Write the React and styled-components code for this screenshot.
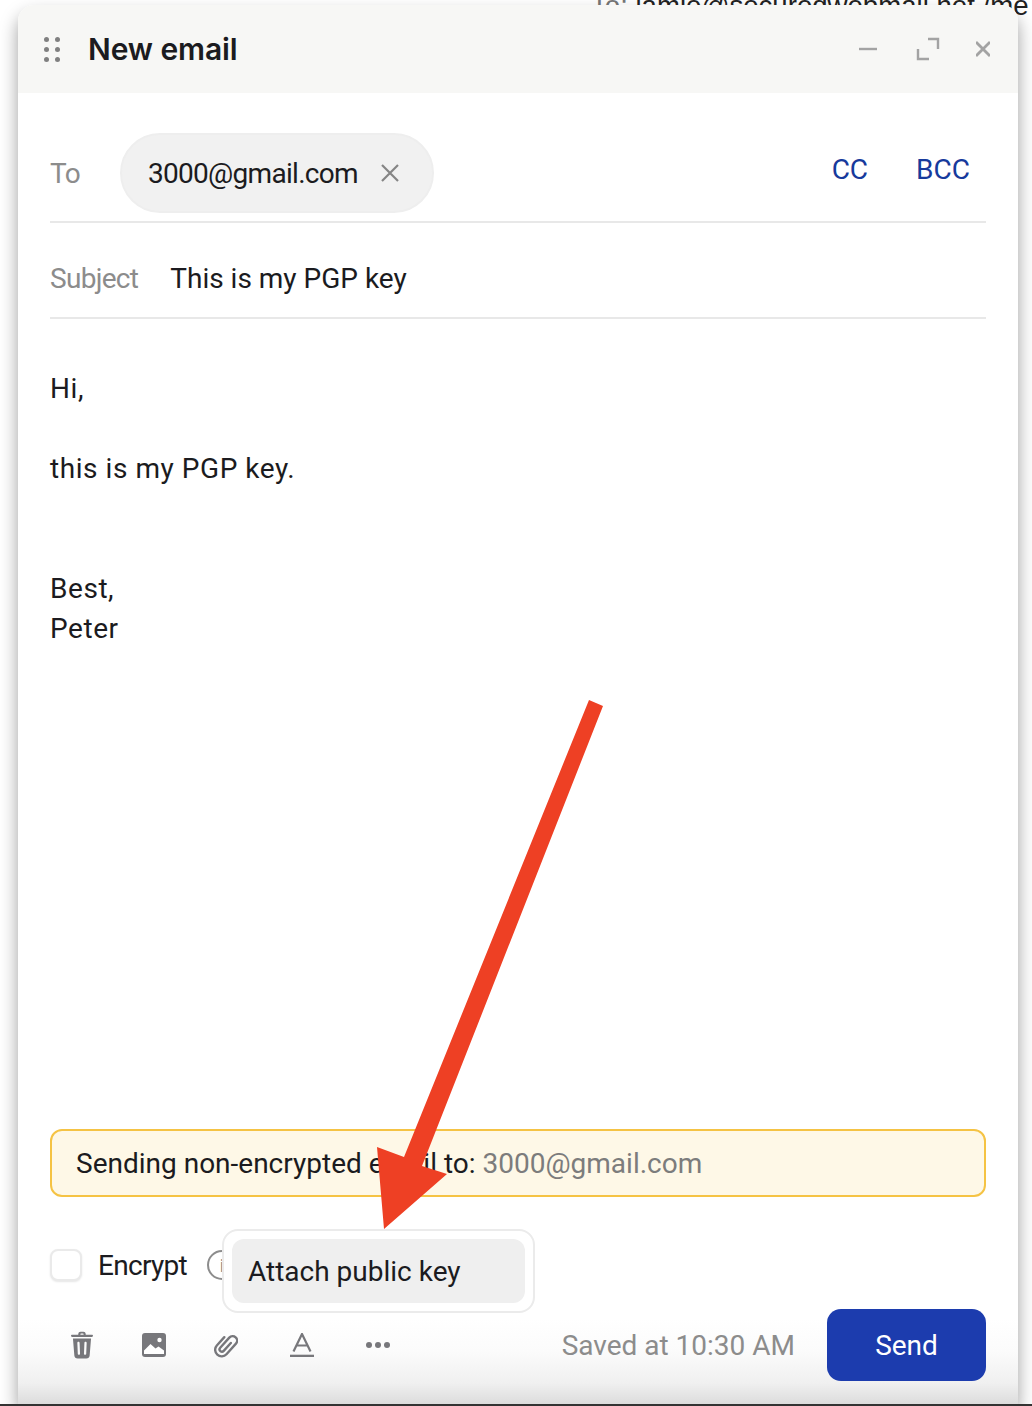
import React from "react";
import styled, { createGlobalStyle } from "styled-components";

const GlobalStyle = createGlobalStyle`
  html, body {
    margin: 0;
    padding: 0;
    background: #fff;
  }
  body {
    font-family: Roboto, "Liberation Sans", sans-serif;
    color: #1b1b20;
  }
`;

function GripIcon() {
  return (
    <svg width="16" height="25" viewBox="0 0 16 25" fill="#808080">
      <circle cx="2.5" cy="2.5" r="2.5" />
      <circle cx="13.5" cy="2.500" r="2.500" />
      <circle cx="2.500" cy="12.500" r="2.500" />
      <circle cx="13.500" cy="12.500" r="2.500" />
      <circle cx="2.500" cy="22.500" r="2.500" />
      <circle cx="13.500" cy="22.500" r="2.500" />
    </svg>
  );
}

function MinimizeIcon() {
  return (
    <svg width="24" height="24" viewBox="0 0 24 24" fill="none" stroke="#a3a3a3" strokeWidth="2.4">
      <path d="M3 12h18" />
    </svg>
  );
}

function ExpandIcon() {
  return (
    <svg width="24" height="24" viewBox="0 0 24 24" fill="none" stroke="#a3a3a3" strokeWidth="2.4">
      <path d="M12 2h10v10M2 12v10h11" />
    </svg>
  );
}

function CloseIcon() {
  return (
    <svg width="14" height="16" viewBox="0 0 14 16" fill="none" stroke="#a3a3a3" strokeWidth="2.800">
      <path d="M0 1l14 14M14 1L0 15" />
    </svg>
  );
}

function ChipCloseIcon() {
  return (
    <svg width="18" height="18" viewBox="0 0 18 18" fill="none" stroke="#858585" strokeWidth="2.200">
      <path d="M1 1l16 16M17 1L1 17" />
    </svg>
  );
}

function TrashIcon() {
  return (
    <svg width="24" height="28" viewBox="0 0 24 30" fill="#77777b">
      <path d="M8 3.500C8 1.600 9.200.8 10.500.8h3C14.800.8 16 1.600 16 3.500v.5h6.500c.8 0 1.300.5 1.300 1.200s-.5 1.300-1.300 1.300H1.500C.7 6.500.2 5.900.2 5.200S.7 4 1.500 4H8zm2.300.5h3.400v-.6c0-.4-.2-.6-.6-.6h-2.200c-.4 0-.6.2-.6.600z" />
      <path fillRule="evenodd" d="M2.300 8h19.400l-1.500 18.200c-.2 2-1.500 3.300-3.500 3.300H7.300c-2 0-3.300-1.300-3.500-3.300zM8.200 11.500c-.7 0-1.200.5-1.200 1.200l.5 11.600c0 .7.500 1.200 1.200 1.200s1.200-.5 1.200-1.200l-.5-11.600c0-.7-.5-1.200-1.200-1.200zm7.600 0c-.7 0-1.200.5-1.200 1.200l-.5 11.600c0 .7.500 1.200 1.200 1.200s1.200-.5 1.200-1.200l.5-11.600c0-.7-.5-1.200-1.200-1.200z" />
    </svg>
  );
}

function ImageIcon() {
  return (
    <svg width="24" height="24" viewBox="0 0 24 24">
      <rect width="24" height="24" rx="3" fill="#77777b" />
      <circle cx="17.500" cy="7" r="2.200" fill="#fff" />
      <path d="M2 21v-3.500l6.500-6.500 5 4.500 3-2 5.500 4V21z" fill="#fff" />
    </svg>
  );
}

function ClipIcon() {
  return (
    <svg width="24" height="26" viewBox="2 1 20 22" fill="none" stroke="#77777b" strokeWidth="2" strokeLinecap="round">
      <g transform="rotate(42 12 12)">
        <path d="M6.500 8v9.500a5.500 5.500 0 0 0 11 0V5.500a3.800 3.800 0 0 0-7.600 0v11.500a2 2 0 0 0 4 0V8" />
      </g>
    </svg>
  );
}

function TextIcon() {
  return (
    <svg width="32" height="24" viewBox="-4 0 32 24" fill="none" stroke="#77777b" strokeWidth="2.200">
      <path d="M3.500 18.500L12 1l8.500 17.500M6.500 12.500h11" />
      <path d="M0 23h24" strokeWidth="2.600" />
    </svg>
  );
}

function DotsIcon() {
  return (
    <svg width="24" height="8" viewBox="0 0 24 8" fill="#77777b">
      <circle cx="3" cy="4" r="3" />
      <circle cx="12" cy="4" r="3" />
      <circle cx="21" cy="4" r="3" />
    </svg>
  );
}

function Arrow() {
  return (
    <ArrowSvg width="1032" height="1406" viewBox="0 0 1032 1406">
      <polygon
        points="589,700 603,706 422,1166 447,1174 384,1229 377,1147 404,1157"
        fill="#ee4024"
      />
    </ArrowSvg>
  );
}

export default function App() {
  return (
    <Page>
      <GlobalStyle />
      <BehindText>
        <BehindLabel>To:</BehindLabel> jamie@securedwebmail.net /me
      </BehindText>
      <ComposeWindow>
        <Header>
          <HeaderLeft>
            <GripIcon />
            <Title>New email</Title>
          </HeaderLeft>
          <WindowControls>
            <MinimizeIcon />
            <ExpandIcon />
            <CloseIcon />
          </WindowControls>
        </Header>

        <Content>
          <ToRow>
            <FieldLabel>To</FieldLabel>
            <Chip>
              <ChipText>3000@gmail.com</ChipText>
              <ChipCloseIcon />
            </Chip>
            <CopyLinks>
              <CopyLink>CC</CopyLink>
              <CopyLink>BCC</CopyLink>
            </CopyLinks>
          </ToRow>

          <SubjectRow>
            <FieldLabel>Subject</FieldLabel>
            <SubjectText>This is my PGP key</SubjectText>
          </SubjectRow>

          <Message>
            <p>Hi,</p>
            <p>&nbsp;</p>
            <p>this is my PGP key.</p>
            <p>&nbsp;</p>
            <p>&nbsp;</p>
            <p>Best,</p>
            <p>Peter</p>
          </Message>

          <Banner>
            Sending non-encrypted email to: <BannerEmail>3000@gmail.com</BannerEmail>
          </Banner>

          <EncryptRow>
            <Checkbox />
            <EncryptLabel>Encrypt</EncryptLabel>
            <InfoCircle>i</InfoCircle>
            <Popup>
              <PopupItem>Attach public key</PopupItem>
            </Popup>
          </EncryptRow>
        </Content>

        <Toolbar>
          <ToolIcons>
            <TrashIcon />
            <ImageIcon />
            <ClipIcon />
            <TextIcon />
            <DotsIcon />
          </ToolIcons>
          <SavedText>Saved at 10:30 AM</SavedText>
          <SendButton>Send</SendButton>
        </Toolbar>
      </ComposeWindow>
      <Arrow />
    </Page>
  );
}

const Page = styled.div`
  position: relative;
  box-sizing: border-box;
  width: 1032px;
  height: 1406px;
  padding: 5px 14px 0 18px;
  overflow: hidden;
  border-bottom: 2px solid #333;
`;

const BehindText = styled.div`
  position: absolute;
  top: -10px;
  left: 591px;
  white-space: nowrap;
  font-family: "Liberation Sans", Arial, sans-serif;
  font-size: 27.6px;
  line-height: 32px;
  color: #222;
`;

const BehindLabel = styled.span`
  color: #777;
`;

const ComposeWindow = styled.div`
  position: relative;
  display: flex;
  flex-direction: column;
  height: 100%;
  background: #fff;
  border-radius: 16px 16px 0 0;
  box-shadow: 0 10px 18px rgba(0, 0, 0, 0.38);
`;

const Header = styled.div`
  display: flex;
  align-items: center;
  justify-content: space-between;
  flex-shrink: 0;
  height: 88px;
  padding: 0 28px 0 26px;
  background: #f7f7f5;
  border-radius: 16px 16px 0 0;
`;

const HeaderLeft = styled.div`
  display: flex;
  align-items: center;
  gap: 28px;
`;

const Title = styled.div`
  font-family: Inter, sans-serif;
  font-size: 30px;
  font-weight: 600;
  letter-spacing: -0.1px;
  color: #1b1b20;
`;

const WindowControls = styled.div`
  display: flex;
  align-items: center;
  gap: 36px;
`;

const Content = styled.div`
  position: relative;
  display: flex;
  flex: 1;
  flex-direction: column;
  min-height: 0;
  padding: 0 32px;
`;

const ToRow = styled.div`
  display: flex;
  align-items: center;
  height: 130px;
  box-sizing: border-box;
  padding: 40px 0 8px;
  border-bottom: 2px solid #e8e8e8;
`;

const FieldLabel = styled.span`
  font-size: 28px;
  letter-spacing: -0.7px;
  color: #8c8c8c;
`;

const Chip = styled.div`
  display: flex;
  align-items: center;
  gap: 23px;
  box-sizing: border-box;
  height: 80px;
  margin-left: 40px;
  padding: 0 33px 0 26px;
  background: #f1f1f1;
  border: 2px solid #eeeeee;
  border-radius: 40px;
`;

const ChipText = styled.span`
  font-size: 28px;
  letter-spacing: -0.7px;
`;

const CopyLinks = styled.div`
  display: flex;
  gap: 48px;
  margin: 0 16px 8px auto;
`;

const CopyLink = styled.span`
  font-size: 28px;
  color: #173a9c;
`;

const SubjectRow = styled.div`
  display: flex;
  align-items: center;
  gap: 32px;
  height: 96px;
  box-sizing: border-box;
  padding-top: 16px;
  border-bottom: 2px solid #e8e8e8;
`;

const SubjectText = styled.span`
  font-size: 28px;
`;

const Message = styled.div`
  flex: 1;
  padding-top: 50px;
  font-size: 28px;
  line-height: 40px;
  letter-spacing: 0.55px;

  p {
    margin: 0;
  }
`;

const Banner = styled.div`
  display: flex;
  align-items: center;
  flex-shrink: 0;
  box-sizing: border-box;
  height: 68px;
  padding: 0 24px;
  font-size: 28px;
  white-space: pre;
  background: #fef8e7;
  border: 2px solid #f5c344;
  border-radius: 12px;
`;

const BannerEmail = styled.span`
  color: #7c7c7c;
`;

const EncryptRow = styled.div`
  position: relative;
  display: flex;
  align-items: center;
  flex-shrink: 0;
  height: 32px;
  margin: 52px 0 28px;
`;

const Checkbox = styled.div`
  box-sizing: border-box;
  width: 32px;
  height: 32px;
  background: #fff;
  border: 2px solid #eaeaea;
  border-radius: 8px;
  box-shadow: 0 1px 2px rgba(0, 0, 0, 0.1);
`;

const EncryptLabel = styled.span`
  margin-left: 16px;
  font-size: 28px;
  letter-spacing: -0.7px;
`;

const InfoCircle = styled.span`
  display: flex;
  align-items: center;
  justify-content: center;
  box-sizing: border-box;
  width: 30px;
  height: 30px;
  margin-left: 20px;
  font-size: 18px;
  color: #8c8c8c;
  border: 2px solid #8c8c8c;
  border-radius: 50%;
`;

const Popup = styled.div`
  position: absolute;
  top: -20px;
  left: 172px;
  box-sizing: border-box;
  width: 313px;
  height: 84px;
  padding: 8px;
  background: #fff;
  border: 2px solid #ebebeb;
  border-radius: 16px;
`;

const PopupItem = styled.div`
  display: flex;
  align-items: center;
  height: 64px;
  padding-left: 16px;
  font-size: 28px;
  background: #efefef;
  border-radius: 12px;
`;

const Toolbar = styled.div`
  display: flex;
  align-items: center;
  flex-shrink: 0;
  height: 95px;
  padding: 0 32px 23px;
  box-sizing: border-box;
  background: linear-gradient(to bottom, #fff 10%, #fbfbfb 45%, #f0f0f0 78%, #dcdcdc 100%);
`;

const ToolIcons = styled.div`
  display: flex;
  align-items: center;
  gap: 48px;
  margin-left: 20px;
`;

const SavedText = styled.span`
  margin-left: auto;
  font-size: 28px;
  color: #8c8c8c;
`;

const SendButton = styled.button`
  width: 159px;
  height: 72px;
  margin-left: 32px;
  font-family: Roboto, sans-serif;
  font-size: 28px;
  color: #fff;
  background: #1c3cae;
  border: 0;
  border-radius: 14px;
`;

const ArrowSvg = styled.svg`
  position: absolute;
  top: 0;
  left: 0;
  pointer-events: none;
`;
